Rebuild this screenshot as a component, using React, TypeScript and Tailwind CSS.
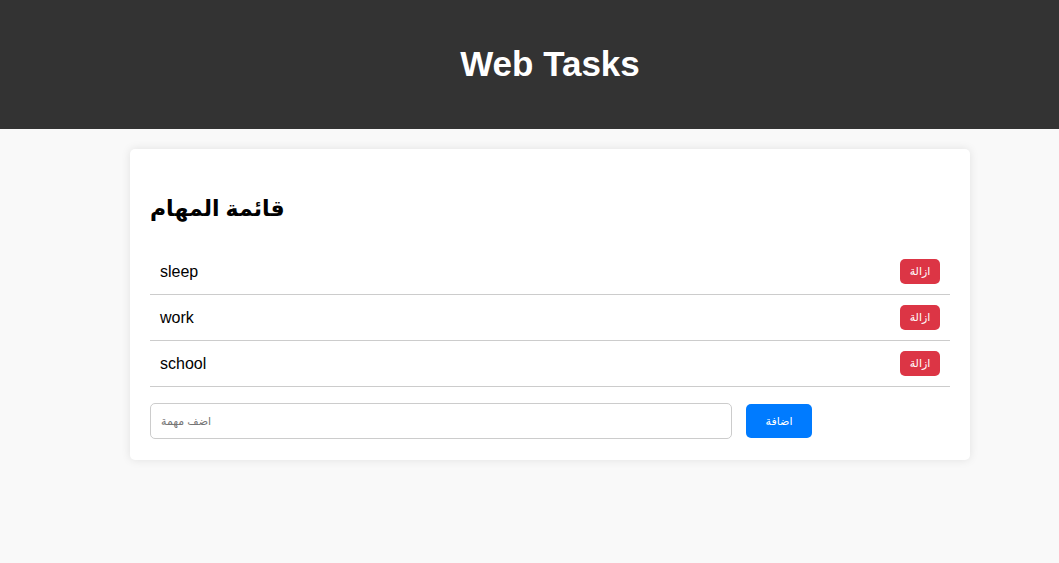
import { useState } from 'react'

const FONT = { fontFamily: '"Liberation Sans", "DejaVu Sans", Arial, sans-serif' }

export default function App() {
  const [tasks, setTasks] = useState(['sleep', 'work', 'school'])
  const [text, setText] = useState('')

  const add = () => {
    if (!text.trim()) return
    setTasks([...tasks, text.trim()])
    setText('')
  }

  return (
    <div className="min-h-[563px] bg-[#f9f9f9] text-black" style={FONT}>
      <header className="flex h-[129px] items-center justify-center bg-[#333333] pl-[41px]">
        <h1 className="text-[35px] font-bold text-white">Web Tasks</h1>
      </header>

      <main className="mt-5 ml-[130px] w-[840px] rounded-[5px] bg-white px-5 pt-5 pb-[21px] shadow-[0_0_10px_rgba(0,0,0,0.1)]">
        <h2 className="mt-5 mb-5 h-[40px] text-[22px] font-bold leading-[40px]">قائمة المهام</h2>

        <ul>
          {tasks.map((t, i) => (
            <li key={i} className="flex h-[46px] items-center justify-between border-b border-[#cccccc] px-[10px] text-[16px]">
              <span>{t}</span>
              <button
                onClick={() => setTasks(tasks.filter((_, j) => j !== i))}
                className="flex h-[25px] w-[40px] items-center justify-center rounded-[5px] bg-[#dc3545] text-[11px] text-white"
              >
                ازالة
              </button>
            </li>
          ))}
        </ul>

        <div className="mt-4 flex items-center gap-[14px]">
          <input
            value={text}
            onChange={(e) => setText(e.target.value)}
            placeholder="اضف مهمة"
            className="h-[36px] w-[582px] rounded-[5px] border border-[#cccccc] px-[10px] text-[11px] outline-none placeholder:text-[#757575]"
          />
          <button onClick={add} className="h-[34px] w-[66px] rounded-[5px] bg-[#007bff] text-[11px] text-white">
            اضافة
          </button>
        </div>
      </main>
    </div>
  )
}
